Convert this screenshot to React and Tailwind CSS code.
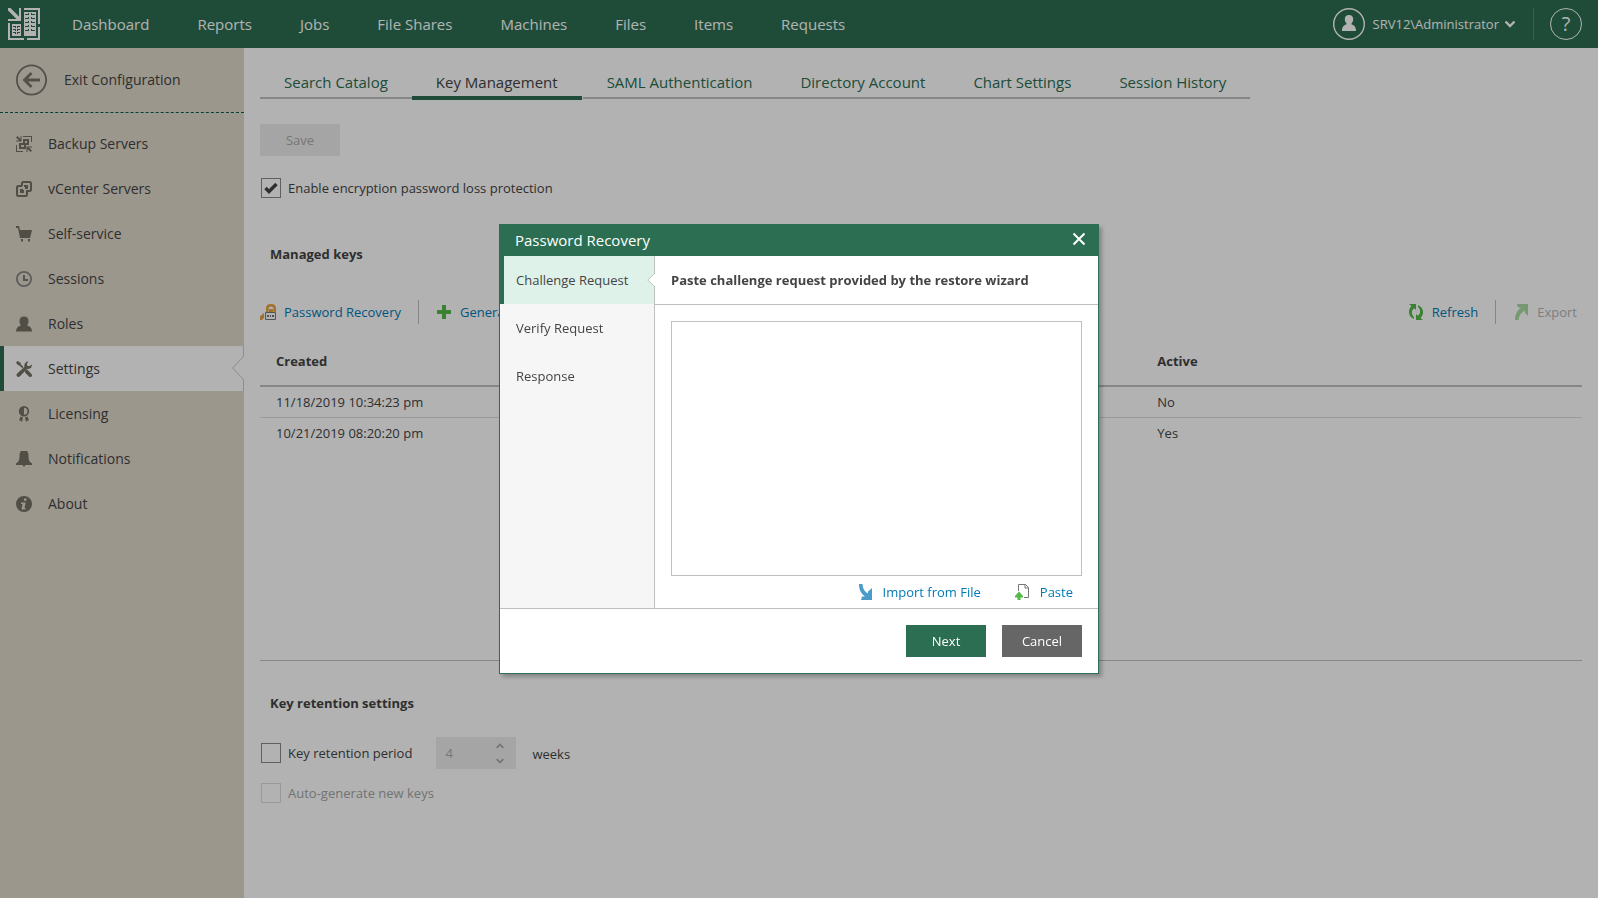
import React, { useState } from "react";

const NAV = ["Dashboard", "Reports", "Jobs", "File Shares", "Machines", "Files", "Items", "Requests"];
const TABS = ["Search Catalog", "Key Management", "SAML Authentication", "Directory Account", "Chart Settings", "Session History"];
const STEPS = ["Challenge Request", "Verify Request", "Response"];

const KEYS = [
  { id: 1, created: "11/18/2019 10:34:23 pm", active: "No" },
  { id: 2, created: "10/21/2019 08:20:20 pm", active: "Yes" },
];

const MENU = [
  { label: "Backup Servers", icon: BackupIcon },
  { label: "vCenter Servers", icon: VCenterIcon },
  { label: "Self-service", icon: CartIcon },
  { label: "Sessions", icon: ClockIcon },
  { label: "Roles", icon: PersonIcon },
  { label: "Settings", icon: ToolsIcon },
  { label: "Licensing", icon: BadgeIcon },
  { label: "Notifications", icon: BellIcon },
  { label: "About", icon: InfoIcon },
];

function Icon({ children }) {
  return (
    <svg viewBox="0 0 16 16" fill="currentColor" aria-hidden="true" className="size-4 shrink-0">
      {children}
    </svg>
  );
}

function BackupIcon() {
  return (
    <Icon>
      <path d="M7 0h9v6h-1V1H7zM0 9h1v6h6v1H0zM4.500 0h1v5.500H0v-1h3.200L0 1.500 1.500 0l3 3zM10.500 10.500H16v1h-3.200L16 14.500 14.500 16l-3-3v3h-1z" />
      <path fillRule="evenodd" d="M7 3h6v6h-3v4H3V7h4zM9 5v2h2V5zM5 9v2h3V9z" />
    </Icon>
  );
}

function VCenterIcon() {
  return (
    <Icon>
      <path
        d="M6 5V2.500Q6 1 7.500 1h6Q15 1 15 2.500v6q0 1.500-1.500 1.500H11v3.500q0 1.500-1.500 1.500h-7Q1 15 1 13.500v-7Q1 5 2.500 5H6"
        fill="none"
        stroke="currentColor"
        strokeWidth="2"
      />
      <path d="M8 4h4v4H9V6H8zM4 8h3v1h1v3H4z" />
    </Icon>
  );
}

function CartIcon() {
  return (
    <Icon>
      <path d="M0 0h3l1 4h12l-2 8H4L2 2H0zM5 13h2v2.500H5zM12 13h2v2.500h-2z" />
    </Icon>
  );
}

function ClockIcon() {
  return (
    <Icon>
      <circle cx="8" cy="8" r="7.100" fill="none" stroke="#858585" strokeWidth="1.800" />
      <path d="M7 4h2v4h3v2H7z" fill="#777" />
    </Icon>
  );
}

function PersonIcon() {
  return (
    <Icon>
      <path d="M8 .500c3 0 4.500 2 4.500 4.500 0 2-.7 3.500-1.500 4.500 3 .8 5 2.500 5 6H0c0-3.500 2-5.200 5-6C4.200 8.500 3.500 7 3.500 5 3.500 2.500 5 .500 8 .500z" />
    </Icon>
  );
}

function ToolsIcon() {
  return (
    <Icon>
      <path d="M0 1.500 1.500 0l3 1.800.3 1.500 2.700 2.800-1.200 1.200-2.800-2.700L2 4.300zM9 9.800l1.200-1.200 1.300.2L15.500 13q1 1.500 0 2.500t-2.500 0L9 11.500z" />
      <path d="M15.700 3.500c.7 3-1.700 5-4.500 4.200L4 15.300c-.8.900-2 .9-2.800.2S.2 13.500 1 12.800l7.500-7C7.700 3 9.700.200 12.600.500L10.800 2.700l.5 2 2 .5z" />
    </Icon>
  );
}

function BadgeIcon() {
  return (
    <Icon>
      <path fillRule="evenodd" d="M8 0a5 5 0 1 1 0 10.400A5 5 0 0 1 8 0zm0 1.700v7a3.500 3.500 0 0 0 0-7z" />
      <path d="M4.500 10.500 7 11.500 6 16l-1.500-1.500H3zM11.500 10.500 9 11.500l1 4.500 1.300-1.500H13z" />
    </Icon>
  );
}

function BellIcon() {
  return (
    <Icon>
      <path d="M5 0h6c1 1 1.500 2.500 1.500 5 0 4 .8 6 3.500 7.500V14H9.500L8 16l-1.500-2H0v-1.500C2.700 11 3.500 9 3.500 5 3.500 2.500 4 1 5 0z" />
    </Icon>
  );
}

function InfoIcon() {
  return (
    <Icon>
      <path fillRule="evenodd" d="M8 0a8 8 0 1 1 0 16A8 8 0 0 1 8 0zm0 2.500v2.300h2.500V2.500zM5 6.500V8h1.500l-1 5.500h4V12H8.500l1.200-5.500z" />
    </Icon>
  );
}

function Logo() {
  return (
    <svg viewBox="0 0 32 32" className="size-8 shrink-0 text-white" fill="currentColor" aria-label="Logo" role="img">
      <path d="M0 0h2.500L11 8.500V0h2v13H0v-2h8.500L0 2.500zM16 0h16v16h-2V2H16zM30 19h2v13H19v-2h11zM0 15h2v15h14v2H0z" />
      <path d="M4 16h9v12H4zM16 4h12v24H16z" />
      <g fill="none" stroke="#2b6e52">
        <path d="M5 18.500h3M9 18.500h3M5 21.500h3M9 21.500h3M5 24.500h3M9 24.500h3" />
        <path d="M7.500 18v9M9.500 18v9" strokeDasharray="2 1" />
        <path d="M17 6.500h4M23 6.500h4M17 10.500h4M23 10.500h4M17 14.500h4M23 14.500h4M17 18.500h4M23 18.500h4M17 22.500h4M23 22.500h4" />
        <path d="M20.500 5v20M23.500 5v20" strokeDasharray="2 2" />
      </g>
    </svg>
  );
}

function LockIcon() {
  return (
    <Icon>
      <path fill="none" stroke="#e5a33c" strokeWidth="2.500" d="M7.300 8V4.500Q7.300 1.300 11 1.300t3.700 3.200V8" />
      <path d="M9 5h4v3H9z" fill="#e5a33c" />
      <path d="M4 9v5l-2 2H0v-3.500z" fill="#e5a33c" />
      <path fill="#fff" stroke="#777" d="M5.500 8.500h10v7h-10z" />
      <path d="M7 11h2v2H7zM10 11h1v2h-1zM12 11h2v2h-2z" fill="#777" />
    </Icon>
  );
}

function PlusIcon() {
  return (
    <Icon>
      <path d="M6 1h4v5h5v4h-5v5H6v-5H1V6h5z" fill="#54b948" />
    </Icon>
  );
}

function RefreshIcon() {
  return (
    <Icon>
      <path d="M1 0h7v6L6.200 4.300C3.200 6.500 3 10 6 13.200v1.600C-.3 12.500-.2 5.500 3.500 2zM15 16H8v-6l1.800 1.700c3-2.200 3.200-5.700.2-8.900V1.200C16.300 3.500 16.200 10.500 12.500 14z" fill="#54b948" />
    </Icon>
  );
}

function ExportIcon() {
  return (
    <Icon>
      <path d="M4 0h11v12l-3.200-3.500V6.500C8 8.500 6 11.500 5.500 16H2C2 10.500 4.200 6.500 8 3.500H5z" fill="#a9dba2" />
    </Icon>
  );
}

function ImportIcon() {
  return (
    <Icon>
      <path d="M2 0h3.500C5.700 4.500 7.500 7.800 11 9.600V7.500L15 4v12H4l1-3.500h3C4 9.500 2 6 2 0z" fill="#4b9bca" />
    </Icon>
  );
}

function PasteIcon() {
  return (
    <Icon>
      <path d="M4.500 7V.500h7l3 3v10H10M11 .500V4h3.500" fill="none" stroke="#777" />
      <path d="M5 7.500 9 12v1.500H6.500V16h-3v-2.500H1V12z" fill="#54b948" />
    </Icon>
  );
}

function Chevron({ className, up }) {
  return (
    <svg viewBox="0 0 12 8" className={className} fill="none" stroke="currentColor" strokeWidth="2.400" aria-hidden="true">
      <path d={up ? "M1.500 6.500 6 2l4.500 4.500" : "M1.500 1.500 6 6l4.500-4.500"} />
    </svg>
  );
}

function ToolButton({ icon, children, disabled, wide }) {
  return (
    <button
      type="button"
      disabled={disabled}
      className={`flex items-center ${wide ? "gap-[10px]" : "gap-2"} ${disabled ? "text-[#b5b5b5]" : "text-[#007bb5]"}`}
    >
      {icon}
      <span className="pt-0.5">{children}</span>
    </button>
  );
}

function Header() {
  return (
    <header className="flex h-12 items-center bg-[#2b6e52] pr-4 pl-2 text-white">
      <Logo />
      <nav className="ml-2 flex flex-1 text-[15px]">
        {NAV.map(item => (
          <a key={item} href="#" className="px-6">{item}</a>
        ))}
      </nav>
      <button type="button" className="flex items-center text-[13px]">
        <svg viewBox="0 0 32 32" className="mr-2 size-8" aria-hidden="true">
          <circle cx="16" cy="16" r="15.300" fill="none" stroke="currentColor" strokeWidth="1.400" />
          <path d="M16 7c3 0 4.200 2 4.200 4.200 0 1.800-.8 3.300-1.600 4.100v1.200c2.800.8 4.400 2.500 4.400 6.500H9c0-4 1.600-5.700 4.400-6.500v-1.200c-.8-.8-1.600-2.300-1.600-4.100C11.800 9 13 7 16 7z" fill="currentColor" />
        </svg>
        <span className="pt-0.5">SRV12\Administrator</span>
        <Chevron className="ml-[5px] h-2 w-3" />
      </button>
      <div className="mr-4 ml-[17px] h-8 w-px bg-[#4b8a70]" />
      <button type="button" aria-label="Help" className="size-8 rounded-full border border-white text-[20px] leading-7">?</button>
    </header>
  );
}

function Sidebar() {
  return (
    <aside className="w-[244px] shrink-0 bg-[#dfd8cb] text-[14px] text-[#444]">
      <a href="#" className="flex h-[65px] items-center gap-4 border-b border-dashed border-[#005f4b] pl-4">
        <svg viewBox="0 0 32 32" className="size-8 text-[#77736a]" fill="none" stroke="currentColor" aria-hidden="true">
          <circle cx="15.500" cy="16" r="14.600" strokeWidth="1.800" />
          <path d="M24 16H9M15.500 9 8.500 16l7 7" strokeWidth="2.800" />
        </svg>
        <span className="pb-0.5">Exit Configuration</span>
      </a>
      <nav className="pt-2">
        {MENU.map(({ label, icon: MenuIcon }) => {
          const active = label === "Settings";
          return (
            <a
              key={label}
              href="#"
              className={`relative flex h-[45px] items-center gap-4 ${active ? "border-r border-l-4 border-r-[#d0cabf] border-l-[#2b6e52] bg-white pl-3" : "pl-4"}`}
            >
              <span className="text-[#747065]"><MenuIcon /></span>
              {label}
              {active && (
                <svg viewBox="0 0 12 24" className="absolute top-[10px] -right-px h-6 w-3" aria-hidden="true">
                  <path d="M12 0 .7 12 12 24" fill="#fff" stroke="#d0cabf" />
                </svg>
              )}
            </a>
          );
        })}
      </nav>
    </aside>
  );
}

function CheckBox({ label, checked, disabled, onChange }) {
  return (
    <label className={`flex h-5 items-center gap-[7px] ${disabled ? "text-[#a5a5a5]" : ""}`}>
      <span className="grid size-5">
        <input
          type="checkbox"
          checked={checked}
          disabled={disabled}
          onChange={onChange}
          className={`col-start-1 row-start-1 size-5 appearance-none border ${disabled ? "border-[#dcdcdc]" : "border-[#888]"}`}
        />
        {checked && (
          <svg viewBox="0 0 20 20" className="pointer-events-none col-start-1 row-start-1 size-5" fill="none" stroke="#444" strokeWidth="3.400" aria-hidden="true">
            <path d="M4.500 10 8 13.500l7.500-7.500" />
          </svg>
        )}
      </span>
      <span className="pt-0.5">{label}</span>
    </label>
  );
}

function Settings() {
  const [lossProtection, setLossProtection] = useState(true);
  const [retention, setRetention] = useState(false);

  return (
    <main className="min-w-0 flex-1 px-4 text-[13px] text-[#444]">
      <nav className="flex items-start pt-[22px] text-[15px] leading-6 text-[#2b6e52]">
        {TABS.map(tab => (
          <a
            key={tab}
            href="#"
            className={`px-6 ${tab === "Key Management" ? "mr-px border-b-4 border-[#2b6e52] pb-[2px] text-[#444]" : "border-b-2 border-[#c0c0c0] pb-[3px]"}`}
          >
            {tab}
          </a>
        ))}
      </nav>

      <button type="button" disabled className="mt-6 block h-8 w-20 bg-[#ededed] pt-0.5 text-[#aaa]">Save</button>
      <div className="mt-[22px] pl-px">
        <CheckBox label="Enable encryption password loss protection" checked={lossProtection} onChange={() => setLossProtection(!lossProtection)} />
      </div>

      <h2 className="mt-[46px] pl-[10px] leading-5 font-bold">Managed keys</h2>

      <div className="mt-9 flex h-6 items-center justify-between pr-[5px]">
        <div className="flex items-center">
          <ToolButton icon={<LockIcon />}>Password Recovery</ToolButton>
          <div className="mx-[17px] h-6 w-px bg-[#c0c0c0]" />
          <ToolButton icon={<PlusIcon />}>Generate</ToolButton>
        </div>
        <div className="flex items-center">
          <ToolButton icon={<RefreshIcon />}>Refresh</ToolButton>
          <div className="mx-[17px] h-6 w-px bg-[#c0c0c0]" />
          <ToolButton icon={<ExportIcon />} disabled>Export</ToolButton>
        </div>
      </div>

      <div className="mt-3 h-[325px] border-b border-[#c0c0c0]">
        <table className="w-full table-fixed border-collapse text-left">
          <thead>
            <tr className="h-[50px] border-b-2 border-[#c0c0c0]">
              <th className="px-4 pt-0.5">Created</th>
              <th className="px-4 pt-0.5">Description</th>
              <th className="px-4 pt-0.5">Active</th>
            </tr>
          </thead>
          <tbody>
            {KEYS.map(key => (
              <tr key={key.id} className="h-[31px] border-b border-[#dedede] last:border-0">
                <td className="px-4 pt-0.5">{key.created}</td>
                <td className="px-4 pt-0.5"></td>
                <td className="px-4 pt-0.5">{key.active}</td>
              </tr>
            ))}
          </tbody>
        </table>
      </div>

      <h2 className="mt-8 pl-[10px] leading-5 font-bold">Key retention settings</h2>

      <div className="mt-6 flex h-8 items-center pl-px">
        <CheckBox label="Key retention period" checked={retention} onChange={() => setRetention(!retention)} />
        <div className="mr-4 ml-6 flex h-8 w-20 items-center bg-[#ededed] pr-[11px] pl-[9px] text-[#aaa]">
          <input type="text" disabled defaultValue="4" aria-label="Weeks" className="w-full min-w-0 flex-1 pt-0.5" />
          <div className="flex flex-col gap-[9px]">
            <button type="button" disabled aria-label="Increase"><Chevron up className="h-[6px] w-[10px]" /></button>
            <button type="button" disabled aria-label="Decrease"><Chevron className="h-[6px] w-[10px]" /></button>
          </div>
        </div>
        <span className="pt-[3px]">weeks</span>
      </div>
      <div className="mt-[14px] pl-px">
        <CheckBox label="Auto-generate new keys" checked={false} disabled />
      </div>
    </main>
  );
}

function PasswordRecovery() {
  const [request, setRequest] = useState("");

  return (
    <div className="fixed inset-0 flex items-center justify-center bg-black/30">
      <div role="dialog" aria-labelledby="dialog-title" className="w-[600px] border border-[#2b6e52] bg-white text-[13px] text-[#444] shadow-[3px_3px_4px_rgba(0,0,0,0.25)]">
        <div className="flex h-[31px] items-center justify-between bg-[#2b6e52] pr-3 pl-[15px] text-white">
          <h1 id="dialog-title" className="text-[15px]">Password Recovery</h1>
          <button type="button" aria-label="Close" className="pb-1">
            <svg viewBox="0 0 14 14" className="size-[14px]" fill="none" stroke="currentColor" strokeWidth="2" aria-hidden="true">
              <path d="M1.500 1.500l11 11M12.500 1.500l-11 11" />
            </svg>
          </button>
        </div>

        <div className="flex h-[352px]">
          <nav className="w-[155px] shrink-0 border-r border-[#c0c0c0] bg-[#f6f6f6]">
            {STEPS.map((step, i) => (
              <a
                key={step}
                href="#"
                className={`relative flex h-12 items-center pt-0.5 ${i === 0 ? "border-l-4 border-[#2b6e52] bg-[#dff2e9] pl-3" : "pl-4"}`}
              >
                {step}
                {i === 0 && (
                  <svg viewBox="0 0 8 14" className="absolute top-[17px] -right-px h-[14px] w-2" aria-hidden="true">
                    <path d="M8 0 .7 7 8 14" fill="#fff" stroke="#c0c0c0" />
                  </svg>
                )}
              </a>
            ))}
          </nav>
          <div className="flex min-w-0 flex-1 flex-col">
            <label htmlFor="request" className="flex h-[49px] items-center border-b border-[#c0c0c0] px-4 pt-0.5 font-bold">
              Paste challenge request provided by the restore wizard
            </label>
            <textarea
              id="request"
              value={request}
              onChange={e => setRequest(e.target.value)}
              className="mx-4 mt-4 flex-1 resize-none border border-[#c0c0c0] p-2"
            />
            <div className="flex h-8 items-center justify-end gap-[33px] pr-[25px]">
              <ToolButton icon={<ImportIcon />} wide>Import from File</ToolButton>
              <ToolButton icon={<PasteIcon />} wide>Paste</ToolButton>
            </div>
          </div>
        </div>

        <div className="flex justify-end gap-4 border-t border-[#c0c0c0] px-4 pt-4 pb-4 text-white">
          <button type="button" className="h-8 w-20 bg-[#2b6e52] pt-0.5">Next</button>
          <button type="button" className="h-8 w-20 bg-[#666] pt-0.5">Cancel</button>
        </div>
      </div>
    </div>
  );
}

export default function App() {
  return (
    <div className="flex min-h-screen flex-col bg-white font-['Open_Sans',sans-serif]">
      <Header />
      <div className="flex flex-1">
        <Sidebar />
        <Settings />
      </div>
      <PasswordRecovery />
    </div>
  );
}
